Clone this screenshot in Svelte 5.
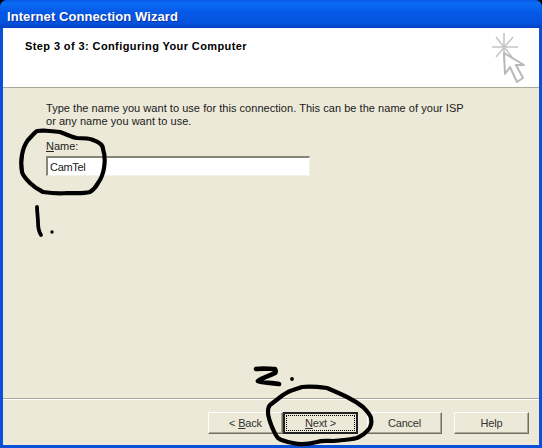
<script>
  const buttons = [
    { pre: '< ', key: 'B', post: 'ack' },
    { pre: '', key: 'N', post: 'ext >', active: true },
    { pre: '', key: '', post: 'Cancel' },
    { pre: '', key: '', post: 'Help' }
  ]
</script>

<main class="window">
  <div class="titlebar">Internet Connection Wizard</div>

  <div class="client">
    <header class="head">
      <h1>Step 3 of 3: Configuring Your Computer</h1>
      <svg class="wand" width="44" height="56" viewBox="0 0 44 56" fill="none">
        <path stroke="#c6c6c6" stroke-width="1.6" d="M13 3V31M1 17H27M5 7l16 20M22 7L5 27" />
        <path d="M13 23l1 21 5-7 7 15 6-4-7-13h8z" fill="#fff" stroke="#b9b9b9" stroke-width="2" stroke-linejoin="round" />
      </svg>
    </header>

    <section class="body">
      <p class="intro">Type the name you want to use for this connection. This can be the name of your ISP<br />or any name you want to use.</p>
      <label for="conn"><u>N</u>ame:</label>
      <input id="conn" value="CamTel" />
    </section>

    <footer class="foot">
      {#each buttons as b}
        <button class:active={b.active}>
          <span class:focus={b.active}>{b.pre}{#if b.key}<u>{b.key}</u>{/if}{b.post}</span>
        </button>
      {/each}
    </footer>
  </div>

  <!-- the marker scribbles on top of the screenshot -->
  <svg class="ink" width="542" height="448" viewBox="0 0 542 448" fill="none" stroke="#000" stroke-linecap="round" stroke-linejoin="round">
    <path stroke-width="4.2" d="M37 131C44 130 52 131 60 132C66 134 71 137 77 138C84 138 89 138 93 140C99 142 103 145 103 149C105 155 105 162 104 168C103 174 101 179 98 183C96 187 93 190 90 192C82 194 75 193 67 193C58 194 50 193 43 192C37 189 33 186 30 183C26 179 23 176 22 172C21 166 21 160 22 155C23 149 25 144 28 140C31 137 34 133 37 131Z" />
    <path stroke-width="3.8" d="M37 207C37 212 38 218 38 222C38 227 39 232 41 235" />
    <circle cx="52" cy="232" r="1.7" fill="#000" stroke="none" />
    <path stroke-width="4.6" d="M256 369C263 368 270 369 275 369C276 371 276 372 275 373C269 376 262 378 258 381C265 383 273 383 279 384" />
    <circle cx="292" cy="379" r="1.9" fill="#000" stroke="none" />
    <path stroke-width="4.2" d="M302 387C311 386 319 387 327 388C334 391 341 394 347 397C353 400 358 403 363 407C367 411 370 414 371 418C372 423 371 427 368 430C365 434 361 436 357 438C349 440 341 440 333 441C328 441 322 440 317 442C309 444 300 445 293 443C287 442 282 441 278 438C275 435 274 431 272 427C270 422 268 417 268 412C268 409 268 407 270 405C274 402 279 398 283 395C286 393 289 391 293 390C296 389 299 388 302 387Z" />
  </svg>
</main>

<style>
  :global(body) {
    margin: 0;
    background: #000;
  }

  .window {
    position: relative;
    width: 542px;
    height: 448px;
    display: flex;
    flex-direction: column;
    background: #0a50d8;
    border-radius: 7px 7px 0 0;
    overflow: hidden;
    font-family: "Liberation Sans", Arial, sans-serif;
    font-size: 11px;
    color: #000;
  }

  .titlebar {
    height: 28px;
    flex: none;
    box-sizing: border-box;
    padding: 9px 0 0 7px;
    font-size: 13px;
    font-weight: bold;
    letter-spacing: 0.08px;
    color: #fff;
    text-shadow: 1px 1px 0 #0a2f9c;
    background: linear-gradient(180deg, #0a5ae6 0%, #0a6cf4 12%, #0558e6 45%, #0454e0 80%, #0340c0 100%);
  }

  .client {
    flex: 1;
    display: flex;
    flex-direction: column;
    margin: 0 3px 3px 3px;
    background: #ece9d8;
  }

  .head {
    height: 60px;
    flex: none;
    display: flex;
    justify-content: space-between;
    box-sizing: border-box;
    padding: 11px 4px 0 22px;
    background: #fff;
    border-bottom: 1px solid #aca899;
  }

  h1 {
    margin: 0;
    font-size: 11px;
    line-height: 14px;
    font-weight: bold;
    letter-spacing: 0.4px;
  }

  .wand {
    margin-top: -9px;
  }

  .body {
    flex: 1;
    padding: 14px 0 0 43px;
  }

  .intro {
    margin: 0;
    line-height: 13px;
    letter-spacing: 0.04px;
    color: #1a1a1a;
  }

  label {
    display: block;
    margin-top: 12px;
    line-height: 13px;
    color: #222;
  }

  input {
    display: block;
    box-sizing: border-box;
    width: 264px;
    height: 20px;
    margin-top: 3px;
    padding: 0 0 0 2px;
    font: inherit;
    letter-spacing: -0.3px;
    color: #222;
    background: #fff;
    border: 1px solid #f4f2e8;
    border-top: 2px solid #87847a;
    border-left: 2px solid #87847a;
    border-radius: 0;
    outline: none;
  }

  .foot {
    height: 47px;
    flex: none;
    display: flex;
    justify-content: flex-end;
    box-sizing: border-box;
    padding: 13px 10px 0 0;
    border-top: 1px solid #aca899;
    box-shadow: inset 0 1px 0 #fff;
  }

  button {
    width: 75px;
    height: 22px;
    padding: 0;
    font: inherit;
    letter-spacing: -0.2px;
    color: #333;
    background: #ece9d8;
    border: 1px solid;
    border-color: #fff #716f64 #716f64 #fff;
    box-shadow: inset -1px -1px 0 #aca899;
    border-radius: 0;
  }

  button:nth-child(3) {
    margin-left: 9px;
  }

  button:nth-child(4) {
    margin-left: 12px;
  }

  button.active {
    border: 2px solid #222;
    box-shadow: none;
  }

  .focus {
    display: block;
    margin: 1px;
    line-height: 14px;
    border: 1px dotted #000;
  }

  .ink {
    position: absolute;
    left: 0;
    top: 0;
    pointer-events: none;
  }
</style>
